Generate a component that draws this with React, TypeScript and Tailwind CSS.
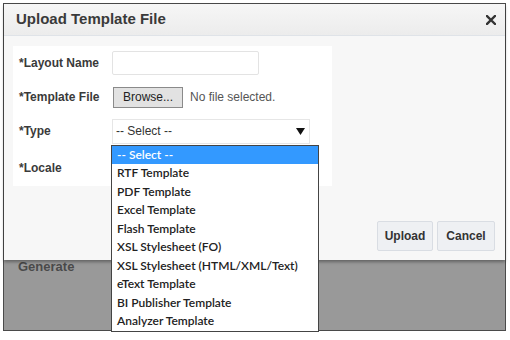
import React from "react";

const types = [
  "-- Select --",
  "RTF Template",
  "PDF Template",
  "Excel Template",
  "Flash Template",
  "XSL Stylesheet (FO)",
  "XSL Stylesheet (HTML/XML/Text)",
  "eText Template",
  "BI Publisher Template",
  "Analyzer Template",
];

export default function App() {
  return (
    <div className="w-[510px] h-[340px] bg-white pt-[3px] pl-[3px] font-['Liberation_Sans',Arial,sans-serif]">
      <div className="w-[503px] h-[328px] border border-[#4a4a4a] bg-[#999999] flex flex-col">
        {/* dialog */}
        <div className="relative z-10 h-[256px] bg-[#f7f7f7] flex flex-col shadow-[0_2px_3px_rgba(0,0,0,0.35)]">
          <div className="h-[32px] shrink-0 flex items-center justify-between pl-[12px] pr-[9px] bg-gradient-to-b from-[#f6f6f6] to-[#ececec] border-b border-[#dfe3e8]">
            <span className="text-[15px] font-bold text-[#3a3a3a]">Upload Template File</span>
            <svg width="10" height="10" viewBox="0 0 10 10" className="mt-[1px]">
              <path d="M1 1 L9 9 M9 1 L1 9" stroke="#333" strokeWidth="2.4" strokeLinecap="square" />
            </svg>
          </div>

          <div className="flex-1 flex flex-col justify-between pb-[9px]">
            <div className="ml-[9px] mt-[10px] w-[319px] h-[140px] bg-white pl-[6px] text-[12px] text-[#3a3a3a]">
              <div className="h-[34px] flex items-center">
                <span className="w-[93px] font-bold">*Layout Name</span>
                <div className="w-[147px] h-[24px] border border-[#e3e3e3] rounded-[2px] bg-white" />
              </div>
              <div className="h-[34px] flex items-center">
                <span className="w-[94px] font-bold">*Template File</span>
                <div className="w-[70px] h-[21px] border border-[#8a8a8a] bg-[#e2e2e2] flex items-center justify-center text-[#222]">
                  Browse...
                </div>
                <span className="ml-[7px] text-[#555]">No file selected.</span>
              </div>
              <div className="h-[34px] flex items-center">
                <span className="w-[93px] font-bold">*Type</span>
                <div className="relative w-[198px] h-[25px] border border-[#e6e6e6] flex items-center justify-between pl-[3px] pr-[4px] text-[#333]">
                  <span>-- Select --</span>
                  <svg width="9" height="7" viewBox="0 0 9 7">
                    <path d="M0 0 H9 L4.5 7 Z" fill="#111" />
                  </svg>
                  <div className="absolute left-[-2px] top-[25px] w-[208px] h-[187px] bg-white border border-[#444] font-['Lato',sans-serif] text-[12px] font-semibold text-[#222] z-20">
                    {types.map((t, i) => (
                      <div
                        key={t}
                        className={
                          i === 0
                            ? "h-[18.5px] flex items-center pl-[5px] bg-[#3399ff] text-white"
                            : "h-[18.5px] flex items-center pl-[5px]"
                        }
                      >
                        {t}
                      </div>
                    ))}
                  </div>
                </div>
              </div>
              <div className="h-[38px] flex items-center pt-[2px]">
                <span className="font-bold">*Locale</span>
              </div>
            </div>

            <div className="flex justify-end gap-[4px] pr-[10px] text-[12px] font-bold text-[#333]">
              <div className="w-[56px] h-[30px] rounded-[2px] border border-[#d9dde3] bg-[#eef0f3] flex items-center justify-center">
                Upload
              </div>
              <div className="w-[58px] h-[30px] rounded-[2px] border border-[#d9dde3] bg-[#eef0f3] flex items-center justify-center">
                Cancel
              </div>
            </div>
          </div>
        </div>

        <div className="-mt-[3px] pl-[14px] text-[13px] font-bold text-[#4a4a4a]">Generate</div>
      </div>
    </div>
  );
}
